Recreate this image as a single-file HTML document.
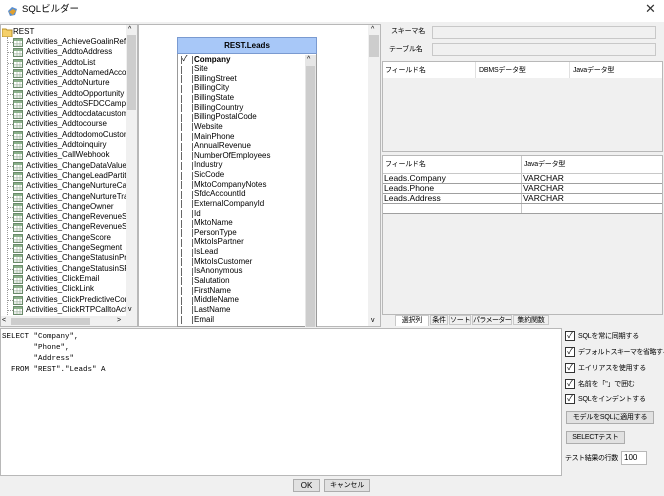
<!DOCTYPE html>
<html><head><meta charset="utf-8"><style>
*{margin:0;padding:0;box-sizing:border-box}
body{width:664px;height:496px;background:#f0f0f0;font-family:"Liberation Sans","Noto Sans CJK JP",sans-serif;font-size:8px;color:#000;position:relative;overflow:hidden}
.a{position:absolute}
.t{white-space:nowrap;line-height:10px}
.j{font-size:7px;letter-spacing:-0.2px}
.sbv{background:#f0f0f0}
.thumb{background:#cdcdcd}
.chk{width:10px;height:10px;border:1px solid #333;background:#fff;font-size:8px;line-height:8px;text-align:center}
.btn{background:#e1e1e1;border:1px solid #adadad;text-align:center;line-height:11px}
</style></head><body>
<div class="a" style="left:0;top:0;width:664px;height:22px;background:#fff"></div>
<svg class="a" style="left:6px;top:5px" width="12" height="12"><path d="M2 6 L6 2 L11 4 L9 10 L4 11Z" fill="#5a8fd0"/><path d="M3 7 L7 4 L10 6 L7 10Z" fill="#e0a030"/></svg>
<div class="a t" style="left:22px;top:5px;font-size:9.5px">SQLビルダー</div>
<div class="a t" style="left:645px;top:4px;font-size:13px;color:#333">✕</div>

<!-- left tree -->
<div class="a" style="left:0;top:24px;width:138px;height:303px;background:#fff;border:1px solid #b8b8b8"></div>
<div class="a sbv" style="left:126px;top:25px;width:11px;height:291px"></div>
<div class="a thumb" style="left:127px;top:35px;width:9px;height:75px"></div>
<div class="a t" style="left:128px;top:25px;font-size:7px">^</div>
<div class="a t" style="left:128px;top:305px;font-size:7px">v</div>
<div class="a sbv" style="left:1px;top:316px;width:136px;height:10px"></div>
<div class="a thumb" style="left:11px;top:318px;width:79px;height:7px"></div>
<div class="a t" style="left:2px;top:316px;font-size:7px">&lt;</div>
<div class="a t" style="left:117px;top:316px;font-size:7px">&gt;</div>
<div class="a" style="left:1px;top:25px;width:125px;height:291px;overflow:hidden">
<svg class="a" style="left:1px;top:3px" width="11" height="9"><path d="M0 1h4l1 1h5v7H0z" fill="#f5d06a" stroke="#b8902a"/></svg>
<div class="a t" style="left:12px;top:2px">REST</div>
<div class="a" style="left:6px;top:12px;width:0;height:290px;border-left:1px dotted #999"></div>
<div id="tree"></div>
</div>

<!-- middle -->
<div class="a" style="left:138px;top:24px;width:243px;height:303px;background:#fff;border:1px solid #b8b8b8"></div>
<div class="a sbv" style="left:368px;top:25px;width:12px;height:301px"></div>
<div class="a thumb" style="left:369px;top:35px;width:10px;height:22px"></div>
<div class="a t" style="left:371px;top:25px;font-size:7px">^</div>
<div class="a t" style="left:371px;top:316px;font-size:7px">v</div>
<div class="a" style="left:177px;top:37px;width:140px;height:290px;border:1px solid #999;background:#fff"></div>
<div class="a t" style="left:177px;top:37px;width:140px;height:17px;background:#a8c8f8;border:1px solid #7a9ad0;text-align:center;line-height:15px;font-weight:bold;font-size:8px">REST.Leads</div>
<div class="a sbv" style="left:305px;top:55px;width:11px;height:272px;background:#e6e6e6"></div>
<div class="a t" style="left:307px;top:55px;font-size:7px">^</div>
<div class="a thumb" style="left:306px;top:66px;width:9px;height:261px"></div>
<div class="a" style="left:178px;top:55px;width:127px;height:272px;overflow:hidden" id="cols"></div>

<!-- right -->
<div class="a t j" style="left:391px;top:27px">スキーマ名</div>
<div class="a" style="left:432px;top:26px;width:224px;height:13px;border:1px solid #c8c8c8;background:#f0f0f0"></div>
<div class="a t j" style="left:389px;top:45px">テーブル名</div>
<div class="a" style="left:432px;top:43px;width:224px;height:13px;border:1px solid #c8c8c8;background:#f0f0f0"></div>
<div class="a" style="left:382px;top:61px;width:281px;height:91px;border:1px solid #b8b8b8;background:#f0f0f0"></div>
<div class="a" style="left:383px;top:62px;width:279px;height:16px;background:#fff"></div>
<div class="a" style="left:475px;top:62px;height:16px;border-left:1px solid #e0e0e0"></div>
<div class="a" style="left:569px;top:62px;height:16px;border-left:1px solid #e0e0e0"></div>
<div class="a t j" style="left:385px;top:66px">フィールド名</div>
<div class="a t j" style="left:479px;top:66px">DBMSデータ型</div>
<div class="a t j" style="left:573px;top:66px">Javaデータ型</div>

<div class="a" style="left:382px;top:155px;width:281px;height:160px;border:1px solid #b8b8b8;background:#f0f0f0"></div>
<div class="a" style="left:383px;top:156px;width:279px;height:17px;background:#fff"></div>
<div class="a" style="left:383px;top:173px;width:279px;height:41px;background:#fff"></div>
<div class="a" style="left:521px;top:156px;height:58px;border-left:1px solid #c8c8c8"></div>
<div class="a" style="left:383px;top:183px;width:279px;border-top:1px solid #a0a0a0"></div>
<div class="a" style="left:383px;top:193px;width:279px;border-top:1px solid #a0a0a0"></div>
<div class="a" style="left:383px;top:203px;width:279px;border-top:1px solid #a0a0a0"></div>
<div class="a" style="left:383px;top:213px;width:279px;border-top:1px solid #a0a0a0"></div>
<div class="a" style="left:383px;top:173px;width:279px;border-top:1px solid #c8c8c8"></div>
<div class="a t j" style="left:385px;top:160px">フィールド名</div>
<div class="a t j" style="left:524px;top:160px">Javaデータ型</div>
<div class="a t" style="left:384px;top:173px;font-size:8.5px">Leads.Company</div>
<div class="a t" style="left:523px;top:173px;font-size:8.5px">VARCHAR</div>
<div class="a t" style="left:384px;top:183px;font-size:8.5px">Leads.Phone</div>
<div class="a t" style="left:523px;top:183px;font-size:8.5px">VARCHAR</div>
<div class="a t" style="left:384px;top:193px;font-size:8.5px">Leads.Address</div>
<div class="a t" style="left:523px;top:193px;font-size:8.5px">VARCHAR</div>

<!-- tabs -->
<div class="a t j" style="left:395px;top:315px;width:34px;height:11px;background:#fff;border:1px solid #c8c8c8;border-bottom:none;text-align:center">選択列</div>
<div class="a t j" style="left:430px;top:315px;width:18px;height:10px;border:1px solid #c8c8c8;text-align:center">条件</div>
<div class="a t j" style="left:449px;top:315px;width:22px;height:10px;border:1px solid #c8c8c8;text-align:center">ソート</div>
<div class="a t j" style="left:472px;top:315px;width:40px;height:10px;border:1px solid #c8c8c8;text-align:center;letter-spacing:-0.6px">パラメーター</div>
<div class="a t j" style="left:513px;top:315px;width:36px;height:10px;border:1px solid #c8c8c8;text-align:center">集約関数</div>

<!-- sql -->
<div class="a" style="left:0;top:328px;width:562px;height:148px;background:#fff;border:1px solid #b8b8b8"></div>
<pre class="a" style="left:2px;top:332px;font-family:'Liberation Mono',monospace;font-size:7.5px;line-height:11px">SELECT "Company",
       "Phone",
       "Address"
  FROM "REST"."Leads" A</pre>

<!-- options -->
<div class="a chk" style="left:565px;top:331px">✓</div><div class="a t j" style="left:578px;top:332px">SQLを常に同期する</div>
<div class="a chk" style="left:565px;top:347px">✓</div><div class="a t j" style="left:578px;top:348px;letter-spacing:-0.5px">デフォルトスキーマを省略する</div>
<div class="a chk" style="left:565px;top:363px">✓</div><div class="a t j" style="left:578px;top:364px">エイリアスを使用する</div>
<div class="a chk" style="left:565px;top:379px">✓</div><div class="a t j" style="left:578px;top:380px">名前を「"」で囲む</div>
<div class="a chk" style="left:565px;top:394px">✓</div><div class="a t j" style="left:578px;top:395px">SQLをインデントする</div>
<div class="a btn t j" style="left:566px;top:411px;width:88px;height:13px">モデルをSQLに適用する</div>
<div class="a btn t j" style="left:566px;top:431px;width:59px;height:13px">SELECTテスト</div>
<div class="a t j" style="left:565px;top:454px;letter-spacing:-0.4px">テスト結果の行数</div>
<div class="a t" style="left:621px;top:451px;width:26px;height:14px;background:#fff;border:1px solid #b8b8b8;line-height:12px;padding-left:2px">100</div>

<div class="a btn t" style="left:293px;top:479px;width:27px;height:13px">OK</div>
<div class="a btn t j" style="left:324px;top:479px;width:46px;height:13px">キャンセル</div>

<script>
var items=["AchieveGoalinRefer","AddtoAddress","AddtoList","AddtoNamedAccoun","AddtoNurture","AddtoOpportunity","AddtoSFDCCampaig","Addtocdatacustom2","Addtocourse","AddtodomoCustomO","Addtoinquiry","CallWebhook","ChangeDataValue","ChangeLeadPartition","ChangeNurtureCade","ChangeNurtureTrack","ChangeOwner","ChangeRevenueStag","ChangeRevenueStag","ChangeScore","ChangeSegment","ChangeStatusinProg","ChangeStatusinSFD","ClickEmail","ClickLink","ClickPredictiveConte","ClickRTPCalltoActic","VisitSalesPage"];
var h="";items.forEach(function(s,i){var y=12+i*10.3;
h+='<div class="a" style="left:7px;top:'+(y+5)+'px;width:5px;border-top:1px dotted #999"></div>';
h+='<svg class="a" style="left:12px;top:'+(y+1)+'px" width="10" height="9"><rect x="0.5" y="0.5" width="9" height="8" fill="#fff" stroke="#6a8a6a"/><rect x="1" y="1" width="8" height="2" fill="#8ab08a"/><path d="M1 5.5h8M1 7h8M4 3v5M7 3v5" stroke="#9ab09a" stroke-width="0.6"/></svg>';
h+='<div class="a t" style="left:25px;top:'+y+'px">Activities_'+s+'</div>';});
document.getElementById("tree").innerHTML=h;
var cols=["Company","Site","BillingStreet","BillingCity","BillingState","BillingCountry","BillingPostalCode","Website","MainPhone","AnnualRevenue","NumberOfEmployees","Industry","SicCode","MktoCompanyNotes","SfdcAccountId","ExternalCompanyId","Id","MktoName","PersonType","MktoIsPartner","IsLead","MktoIsCustomer","IsAnonymous","Salutation","FirstName","MiddleName","LastName","Email"];
h="";cols.forEach(function(s,i){var y=i*9.63;
h+='<div class="a" style="left:3px;top:'+(y+1)+'px;height:8px;border-left:1px solid #666"></div>';
h+='<div class="a" style="left:14px;top:'+(y+1)+'px;height:8px;border-left:1px solid #666"></div>';
if(i==0)h+='<div class="a t" style="left:4px;top:'+(y-1)+'px;font-size:8px">✓</div>';
h+='<div class="a t" style="left:16px;top:'+(y-0.5)+'px;'+(i==0?'font-weight:bold':'')+'">'+s+'</div>';});
document.getElementById("cols").innerHTML=h;
</script>
</body></html>
